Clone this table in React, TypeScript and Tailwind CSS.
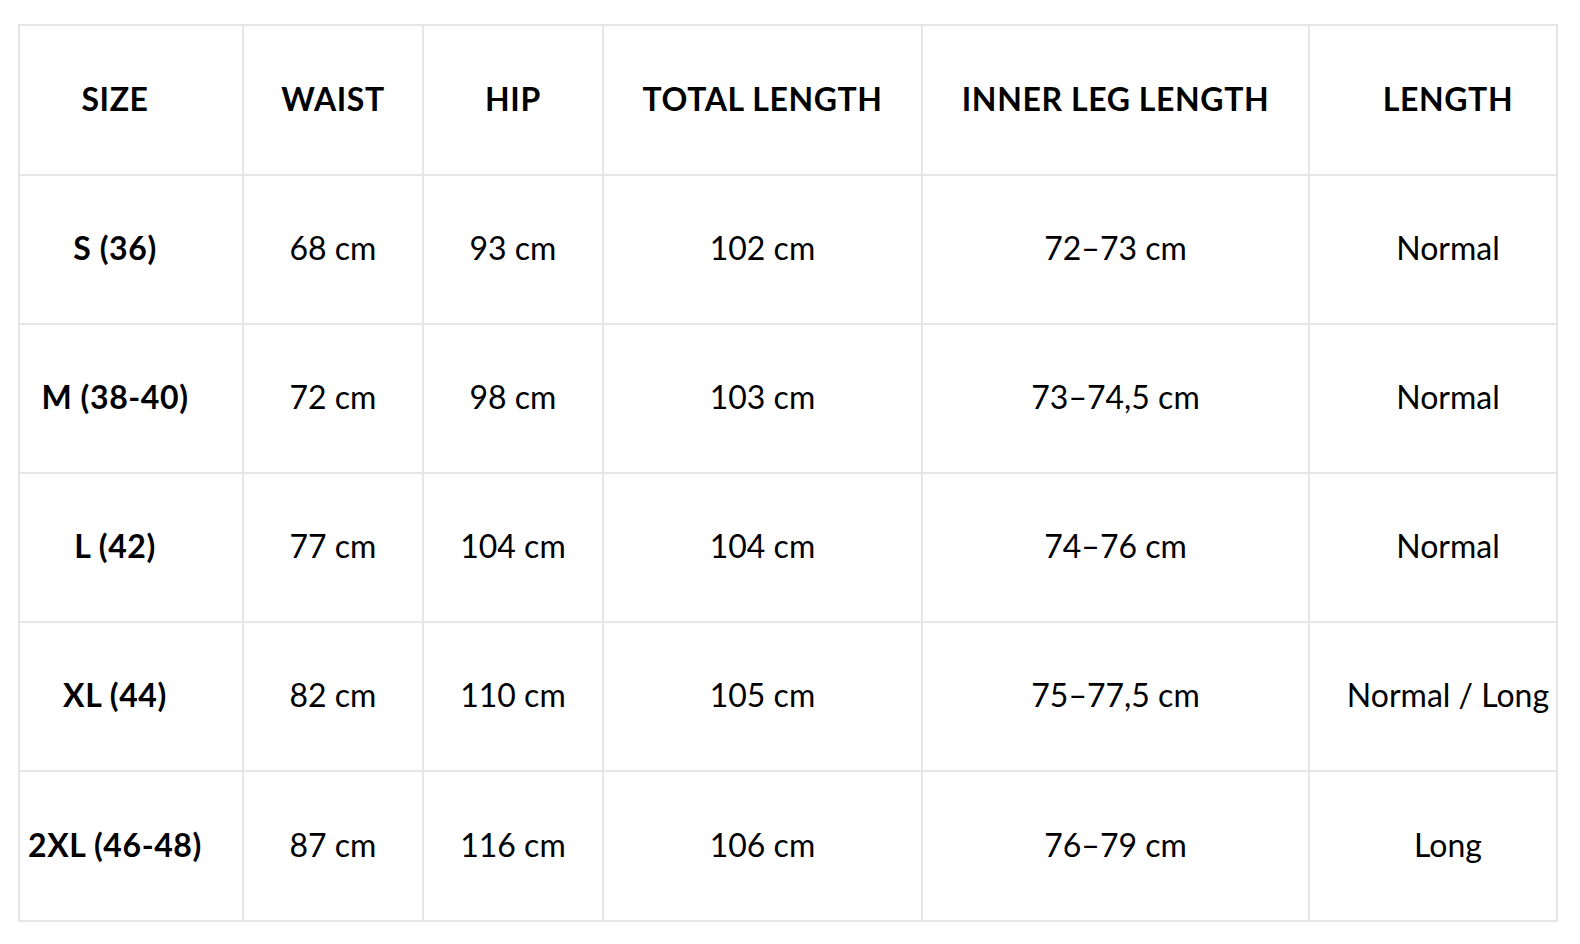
import React from "react";

const headers = ["SIZE", "WAIST", "HIP", "TOTAL LENGTH", "INNER LEG LENGTH", "LENGTH"];

const rows = [
  ["S (36)", "68 cm", "93 cm", "102 cm", "72–73 cm", "Normal"],
  ["M (38-40)", "72 cm", "98 cm", "103 cm", "73–74,5 cm", "Normal"],
  ["L (42)", "77 cm", "104 cm", "104 cm", "74–76 cm", "Normal"],
  ["XL (44)", "82 cm", "110 cm", "105 cm", "75–77,5 cm", "Normal / Long"],
  ["2XL (46-48)", "87 cm", "116 cm", "106 cm", "76–79 cm", "Long"],
];

// first and last column sit a little off-centre in the source
const cellPad = ["pr-[32px]", "", "", "", "", "pl-[30px]"];

function Cell({ children, col, bold }: { children: React.ReactNode; col: number; bold?: boolean }) {
  return (
    <div
      className={`flex items-center justify-center whitespace-nowrap border-l-2 border-t-2 border-[#e6e6e6] pb-[3px] text-[32px] leading-none text-black ${
        bold ? "font-bold tracking-[0.6px]" : "font-normal"
      } ${cellPad[col]}`}
    >
      {children}
    </div>
  );
}

export default function App() {
  return (
    <div className="min-h-screen bg-white pl-[18px] pt-[24px]" style={{ fontFamily: "Lato, 'Noto Sans', sans-serif" }}>
      <div className="grid w-[1540px] grid-cols-[224px_180px_180px_319px_387px_248px] grid-rows-[150px_149px_149px_149px_149px_150px] border-b-2 border-r-2 border-[#e6e6e6]">
        {headers.map((h, i) => (
          <Cell key={h} col={i} bold>
            {h}
          </Cell>
        ))}
        {rows.map((r) =>
          r.map((v, i) => (
            <Cell key={r[0] + i} col={i} bold={i === 0}>
              {v}
            </Cell>
          ))
        )}
      </div>
    </div>
  );
}
